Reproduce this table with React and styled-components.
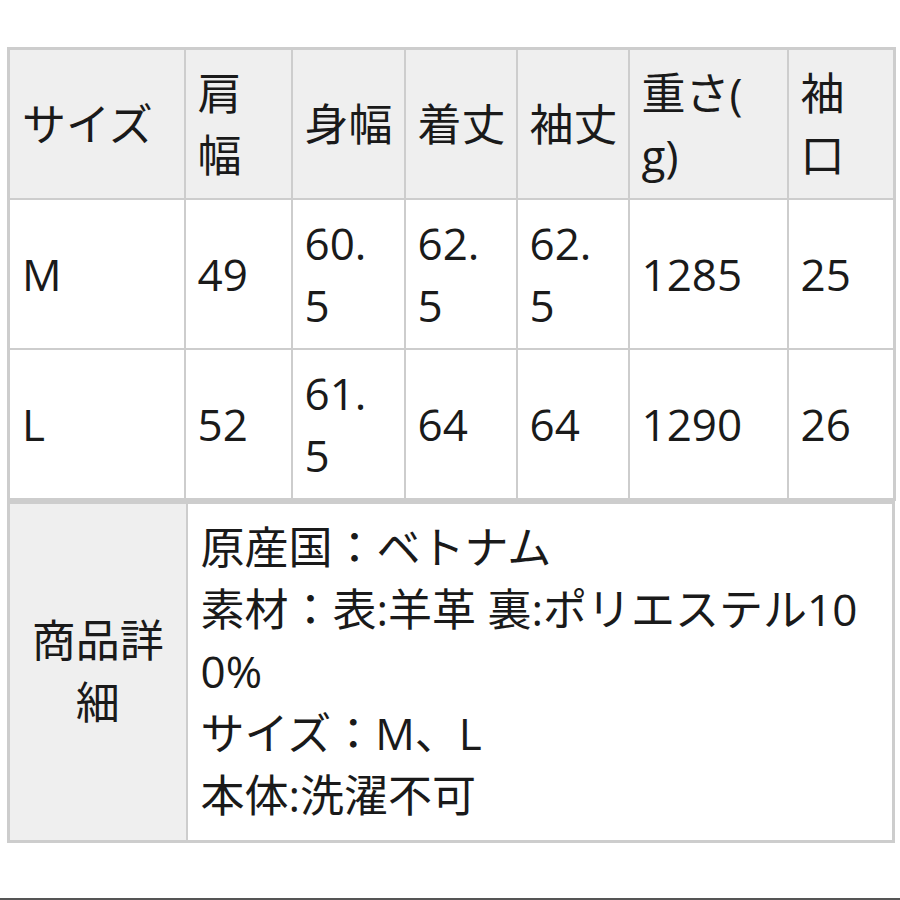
import React from "react";
import styled, { createGlobalStyle } from "styled-components";

const GlobalStyle = createGlobalStyle`
  html, body {
    margin: 0;
    padding: 0;
    background: #fff;
  }
  body {
    font-family: "Open Sans", "Noto Sans CJK JP", sans-serif;
    color: #1a1a1a;
  }
`;

const sizeColumns = [176, 107, 113, 112, 112, 159, 107];

const headers = [["サイズ"], ["肩", "幅"], ["身幅"], ["着丈"], ["袖丈"], ["重さ(", "g)"], ["袖", "口"]];

const rows = [
  [["M"], ["49"], ["60.", "5"], ["62.", "5"], ["62.", "5"], ["1285"], ["25"]],
  [["L"], ["52"], ["61.", "5"], ["64"], ["64"], ["1290"], ["26"]],
];

const details = [
  ["原産国：ベトナム"],
  ["素材：表:羊革 裏:ポリエステル10", "0%"],
  ["サイズ：M、L"],
  ["本体:洗濯不可"],
];

const Page = styled.div`
  height: 900px;
  display: flex;
  flex-direction: column;
  padding: 47px 0 0 7px;
  box-sizing: border-box;
`;

const Table = styled.table`
  width: ${(p) => p.$width || 886}px;
  border-collapse: collapse;
  table-layout: fixed;
  border: 3px solid #cdcdcd;
  font-size: 44px;
  line-height: 62px;
`;

const Cell = styled.td`
  border: 2px solid #cdcdcd;
  padding: 12px 12px;
  height: 124px;
  box-sizing: border-box;
  vertical-align: middle;
  text-align: left;
  background: ${(p) => (p.$shaded ? "#efefef" : "#fff")};
  font-weight: 400;
  white-space: nowrap;
`;

const DetailCell = styled.td`
  border: 2px solid #cdcdcd;
  padding: 12px 13px 14px;
  vertical-align: middle;
  text-align: ${(p) => (p.$center ? "center" : "left")};
  background: ${(p) => (p.$shaded ? "#efefef" : "#fff")};
  font-weight: 400;
  white-space: nowrap;
`;

const Line = styled.span`
  display: block;
`;

const Footer = styled.div`
  margin-top: auto;
  margin-left: -7px;
  height: 2px;
  background: #555;
`;

function Lines({ parts }) {
  return parts.map((t, i) => <Line key={i}>{t}</Line>);
}

export default function App() {
  return (
    <>
      <GlobalStyle />
      <Page>
        <Table>
          <colgroup>
            {sizeColumns.map((w, i) => (
              <col key={i} style={{ width: w }} />
            ))}
          </colgroup>
          <tbody>
            <tr>
              {headers.map((h, i) => (
                <Cell as="th" key={i} $shaded>
                  <Lines parts={h} />
                </Cell>
              ))}
            </tr>
            {rows.map((r, ri) => (
              <tr key={ri}>
                {r.map((c, ci) => (
                  <Cell key={ci}>
                    <Lines parts={c} />
                  </Cell>
                ))}
              </tr>
            ))}
          </tbody>
        </Table>
        <Table $width={888}>
          <colgroup>
            <col style={{ width: 178 }} />
            <col />
          </colgroup>
          <tbody>
            <tr>
              <DetailCell as="th" $shaded $center>
                <Lines parts={["商品詳", "細"]} />
              </DetailCell>
              <DetailCell>
                {details.map((d, i) => (
                  <Lines key={i} parts={d} />
                ))}
              </DetailCell>
            </tr>
          </tbody>
        </Table>
        <Footer />
      </Page>
    </>
  );
}
